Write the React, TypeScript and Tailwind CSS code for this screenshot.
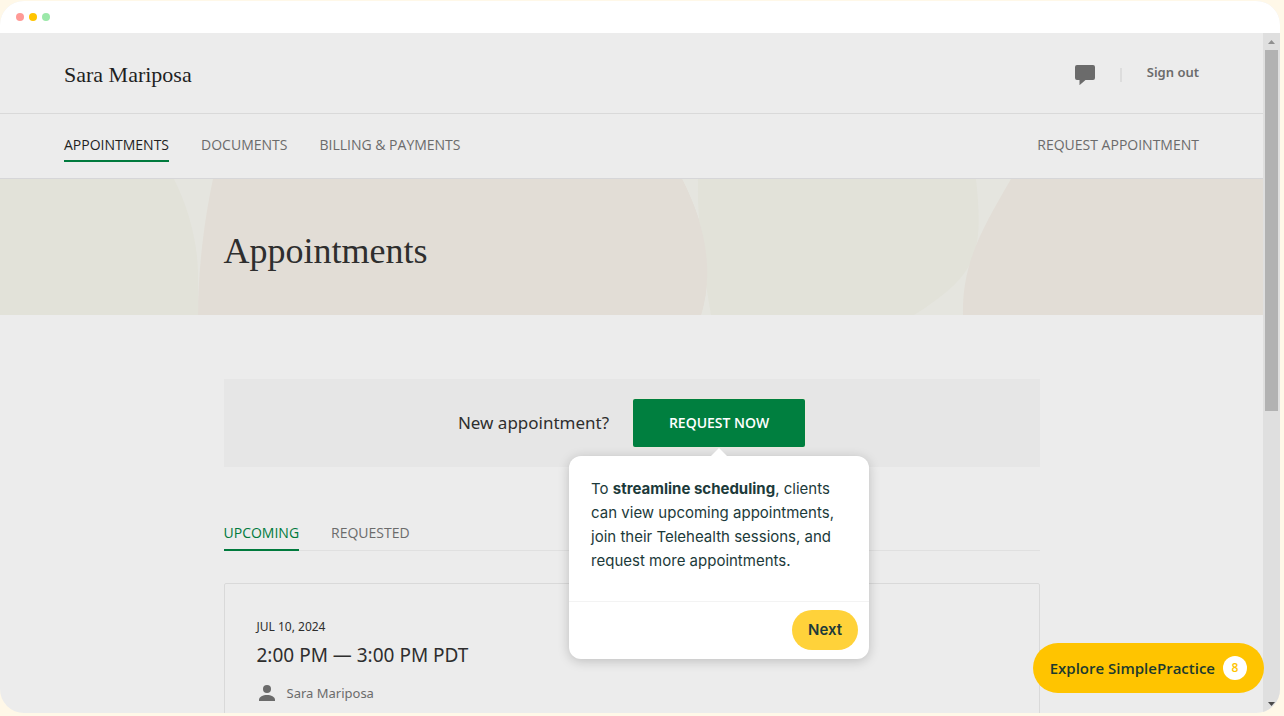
import type { ReactNode } from 'react';

const sans = "font-['Noto_Sans','Open_Sans',sans-serif]";

function TitleBar() {
  return (
    <div className="flex h-8 shrink-0 items-center gap-[5px] bg-white px-4">
      <span className="size-2 rounded-full bg-[#ff9a96]" />
      <span className="size-2 rounded-full bg-[#ffc400]" />
      <span className="size-2 rounded-full bg-[#9be8a9]" />
    </div>
  );
}

function ChatIcon() {
  return (
    <svg width="20" height="20" viewBox="0 0 20 20" fill="#6b6b6b" aria-hidden="true">
      <path d="M2 0h16a2 2 0 0 1 2 2v11a2 2 0 0 1-2 2h-7.500L4.500 20.200V15H2a2 2 0 0 1-2-2V2a2 2 0 0 1 2-2z" />
    </svg>
  );
}

function PersonIcon() {
  return (
    <svg width="16" height="16" viewBox="0 0 16 16" fill="#6b6b6b" aria-hidden="true">
      <circle cx="8" cy="4" r="4" />
      <path d="M0 16v-1C0 11.500 4 10 8 10s8 1.500 8 5v1z" />
    </svg>
  );
}

function Header() {
  return (
    <header>
      <div className="flex h-[81px] items-center justify-between border-b border-[#d9d9d9] px-16">
        <a href="#home" className="pt-1 font-['Liberation_Serif',serif] text-[22px] leading-7 text-[#1f1f1f]">
          Sara Mariposa
        </a>
        <div className="flex items-center gap-[25px] pt-1 text-[13px] leading-5 font-semibold text-[#6b6b6b]">
          <button type="button" aria-label="Messages">
            <ChatIcon />
          </button>
          <span className="h-3.5 w-0.5 bg-[#dddddd]" />
          <a href="#sign-out" className="pb-1.5">Sign out</a>
        </div>
      </div>
      <nav className="flex h-[65px] items-center justify-between border-b border-[#d6d6d8] px-16 font-['Open_Sans',sans-serif] text-sm leading-5 font-medium text-[#6b6b6b]">
        <div className="flex gap-8">
          <NavLink href="#appointments" active>APPOINTMENTS</NavLink>
          <NavLink href="#documents">DOCUMENTS</NavLink>
          <NavLink href="#billing">BILLING &amp; PAYMENTS</NavLink>
        </div>
        <NavLink href="#request">REQUEST APPOINTMENT</NavLink>
      </nav>
    </header>
  );
}

function NavLink({ href, active, children }: { href: string; active?: boolean; children: ReactNode }) {
  return (
    <a
      href={href}
      className={
        active
          ? 'border-b-2 border-[#007a3d] py-[5px] text-[#1f1f1f]'
          : 'border-b-2 border-transparent py-[5px]'
      }
    >
      {children}
    </a>
  );
}

function Hero() {
  return (
    <section className="relative flex h-[136px] items-center overflow-hidden bg-[#e5e5df]">
      <svg
        className="absolute inset-0 size-full"
        viewBox="0 0 1263 136"
        preserveAspectRatio="none"
        aria-hidden="true"
      >
        <path d="M0 0H174C189 30 198 65 198 96V136H0z" fill="#e2e2d9" />
        <path d="M213 0H682C704 43 715 90 701 136H198C198 92 204 42 213 0z" fill="#e2ddd6" />
        <path d="M698 0H976C984 76 977 96 914 136H711C704 96 697 45 698 0z" fill="#e2e2d9" />
        <path d="M682 0C704 43 715 90 701 136H600V0z" fill="#e2ddd6" />
        <path d="M1011 0H1263V136H963C962 84 982 50 1011 0z" fill="#e2ddd6" />
      </svg>
      <h1 className="relative mx-auto w-[816px] pt-2 font-['Liberation_Serif',serif] text-4xl text-[#2e2e2e]">
        Appointments
      </h1>
    </section>
  );
}

function TourStep() {
  return (
    <div
      role="dialog"
      aria-label="Product tour"
      className="absolute top-full left-1/2 z-10 mt-[9px] w-[300px] -translate-x-1/2 rounded-xl bg-white font-['Inter',sans-serif] text-[#1c3a3a] shadow-[0_2px_12px_rgba(0,0,0,0.2)]"
    >
      <svg className="absolute bottom-full left-1/2 -translate-x-1/2" width="16" height="8" viewBox="0 0 16 8" fill="#fff" aria-hidden="true">
        <path d="M0 8 8 0l8 8z" />
      </svg>
      <p className="px-[22px] pt-[21px] pb-7 text-[15px] leading-6">
        To <strong className="font-bold">streamline scheduling</strong>, clients can view upcoming
        appointments, join their Telehealth sessions, and request more appointments.
      </p>
      <div className="flex justify-end border-t border-[#f3f3f3] px-[11px] pt-2 pb-[9px]">
        <button type="button" className="h-10 rounded-full bg-[#ffd23a] px-4 text-[15px] leading-6 font-semibold">
          Next
        </button>
      </div>
    </div>
  );
}

function RequestBanner() {
  return (
    <section className="flex h-[88px] items-center justify-center gap-6 bg-[#e6e6e6]">
      <p className="text-[17px] leading-6 text-[#2e2e2e]">New appointment?</p>
      <div className="relative">
        <button
          type="button"
          className="h-12 w-[172px] rounded-xs bg-[#007f3f] font-['Open_Sans',sans-serif] text-sm leading-5 font-semibold text-white shadow-[0_0_3px_#f0ead0]"
        >
          REQUEST NOW
        </button>
        <TourStep />
      </div>
    </section>
  );
}

function Appointments() {
  return (
    <>
      <div role="tablist" className="mt-14 flex gap-8 border-b border-[#e0e0e0] font-['Open_Sans',sans-serif] text-sm leading-5 font-medium">
        <button type="button" role="tab" aria-selected="true" className="-mb-px border-b-2 border-[#007a3d] pb-1.5 text-[#007a3d]">
          UPCOMING
        </button>
        <button type="button" role="tab" aria-selected="false" className="-mb-px border-b-2 border-transparent pb-1.5 text-[#6b6b6b]">
          REQUESTED
        </button>
      </div>
      <article className="mt-8 rounded-xs border border-[#d9d9d9] px-8 pt-[33px] pb-16">
        <p className="text-xs leading-5 text-[#2e2e2e]">JUL 10, 2024</p>
        <h2 className="mt-1 text-[19px] leading-7 text-[#2e2e2e]">2:00 PM — 3:00 PM PDT</h2>
        <p className="mt-3.5 flex items-center gap-3 pl-0.5 text-[13px] leading-5 text-[#6b6b6b]">
          <PersonIcon />
          Sara Mariposa
        </p>
      </article>
    </>
  );
}

function ScrollTrack() {
  return (
    <div className="flex w-[17px] shrink-0 flex-col items-center bg-[#dfdfdf]" aria-hidden="true">
      <svg className="shrink-0" width="17" height="17" viewBox="0 0 17 17" fill="#8f8f8f">
        <path d="M5 11l3.500-4 3.500 4z" />
      </svg>
      <div className="h-[361px] w-[13px] bg-[#b2b2b2]" />
      <svg className="mt-auto shrink-0" width="17" height="17" viewBox="0 0 17 17" fill="#4a4a4a">
        <path d="M5 6h7l-3.500 4z" />
      </svg>
    </div>
  );
}

export default function App() {
  return (
    <div className={`h-screen bg-[#fff8e8] pt-px pr-1 pb-[3px] ${sans}`}>
      <div className="relative flex h-full flex-col overflow-hidden rounded-3xl bg-[#ececec]">
        <TitleBar />
        <div className="flex min-h-0 flex-1">
          <div className="min-w-0 flex-1 overflow-hidden">
            <Header />
            <Hero />
            <main className="mx-auto mt-16 w-[816px]">
              <RequestBanner />
              <Appointments />
            </main>
          </div>
          <ScrollTrack />
        </div>
        <button
          type="button"
          className="absolute right-4 bottom-5 flex h-[50px] items-center gap-2 rounded-full bg-[#ffc400] px-[17px] font-['Open_Sans',sans-serif] text-[15px] leading-6 font-semibold text-[#1c3a2e]"
        >
          Explore SimplePractice
          <span className="flex size-6 items-center justify-center rounded-full bg-white text-xs text-[#ffc400]">8</span>
        </button>
      </div>
    </div>
  );
}
